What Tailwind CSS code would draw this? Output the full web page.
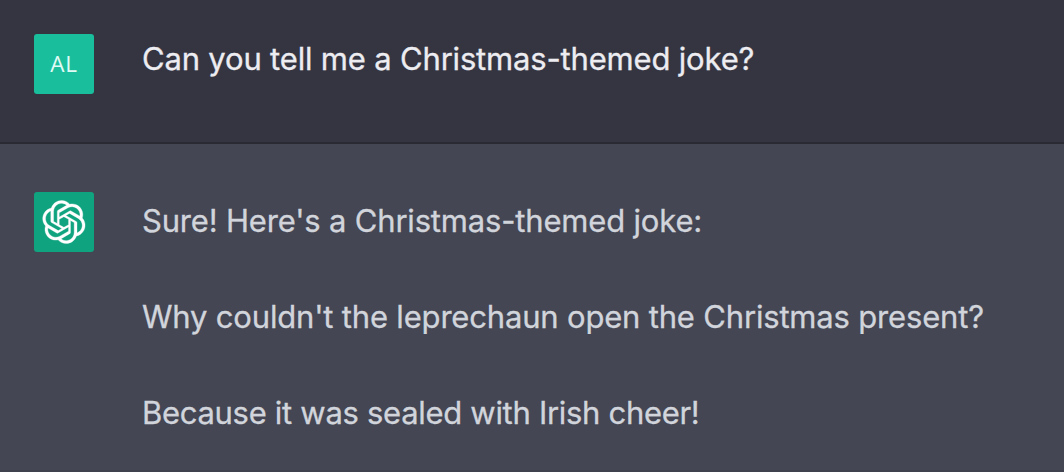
<!DOCTYPE html>
<html lang="en">
<head>
    <meta charset="UTF-8">
    <meta name="viewport" content="width=device-width, initial-scale=1.0">
    <title>Chat</title>
    <script src="https://cdn.jsdelivr.net/npm/@tailwindcss/browser@4"></script>
</head>
<body class="bg-[#444654] font-['Inter',sans-serif] h-screen overflow-hidden flex flex-col">

    <!-- User message -->
    <div class="h-36 shrink-0 bg-[#343541] border-b-2 border-[#2a2b32] flex items-start gap-12 pl-[34px] pt-[34px]">
        <div class="size-[60px] shrink-0 rounded-[3px] bg-[#19bf9d] text-[#e0fbf5] flex items-center justify-center pb-px">
            <span class="font-['Open_Sans',sans-serif] text-[22.5px] tracking-[0.8px]">AL</span>
        </div>
        <p class="pt-px text-[31px] leading-[48px] tracking-[-0.18px] [-webkit-text-stroke:0.3px] text-[#ececf1] whitespace-nowrap">Can you tell me a Christmas-themed joke?</p>
    </div>

    <!-- Assistant message -->
    <div class="grow flex items-start gap-12 pl-[34px] pt-12 border-b-2 border-[#3f414e]">
        <div class="size-[60px] shrink-0 rounded-[3px] bg-[#10a37f] text-white flex items-center justify-center">
            <svg class="size-11" viewBox="0 0 41 41" fill="none">
                <path d="M37.5324 16.8707C37.9808 15.5241 38.1363 14.0974 37.9886 12.6859C37.8409 11.2744 37.3934 9.91076 36.676 8.68622C35.6126 6.83404 33.9882 5.3676 32.0373 4.4985C30.0864 3.62941 27.9098 3.40259 25.8215 3.85078C24.8796 2.7893 23.7219 1.94125 22.4257 1.36341C21.1295 0.785575 19.7249 0.491269 18.3058 0.500197C16.1708 0.495044 14.0893 1.16803 12.3614 2.42214C10.6335 3.67624 9.34853 5.44666 8.6917 7.47815C7.30085 7.76286 5.98686 8.3414 4.8377 9.17505C3.68854 10.0087 2.73073 11.0782 2.02839 12.312C0.956464 14.1591 0.498905 16.2988 0.721698 18.4228C0.944492 20.5467 1.83612 22.5449 3.268 24.1293C2.81966 25.4759 2.66413 26.9026 2.81182 28.3141C2.95951 29.7256 3.40701 31.0892 4.12437 32.3138C5.18791 34.1659 6.8123 35.6322 8.76321 36.5013C10.7141 37.3704 12.8907 37.5973 14.9789 37.1492C15.9208 38.2107 17.0786 39.0587 18.3747 39.6366C19.6709 40.2144 21.0755 40.5087 22.4946 40.4998C24.6307 40.5054 26.7133 39.8321 28.4418 38.5772C30.1704 37.3223 31.4556 35.5506 32.1119 33.5179C33.5027 33.2332 34.8167 32.6547 35.9659 31.821C37.115 30.9874 38.0728 29.9178 38.7752 28.684C39.8458 26.8371 40.3023 24.6979 40.0789 22.5748C39.8556 20.4517 38.9639 18.4544 37.5324 16.8707ZM22.4978 37.8849C20.7443 37.8874 19.0459 37.2733 17.6994 36.1501C17.7601 36.117 17.8666 36.0586 17.936 36.0161L25.9004 31.4156C26.1003 31.3019 26.2663 31.137 26.3813 30.9378C26.4964 30.7386 26.5563 30.5124 26.5549 30.2825V19.0542L29.9213 20.998C29.9389 21.0068 29.9541 21.0198 29.9656 21.0359C29.977 21.052 29.9842 21.0707 29.9867 21.0902V30.3889C29.9842 32.375 29.1946 34.2791 27.7909 35.6841C26.3872 37.0892 24.4838 37.8806 22.4978 37.8849ZM6.39227 31.0064C5.51397 29.4888 5.19742 27.7107 5.49804 25.9832C5.55718 26.0187 5.66048 26.0818 5.73461 26.1244L13.699 30.7248C13.8975 30.8408 14.1233 30.902 14.3532 30.902C14.583 30.902 14.8088 30.8408 15.0073 30.7248L24.731 25.1103V28.9979C24.7321 29.0177 24.7283 29.0376 24.7199 29.0556C24.7115 29.0736 24.6988 29.0893 24.6829 29.1012L16.6317 33.7497C14.9096 34.7416 12.8643 35.0097 10.9447 34.4954C9.02506 33.9811 7.38785 32.7263 6.39227 31.0064ZM4.29707 13.6194C5.17156 12.0998 6.55279 10.9364 8.19885 10.3327C8.19885 10.4013 8.19491 10.5228 8.19491 10.6071V19.808C8.19351 20.0378 8.25334 20.2638 8.36823 20.4629C8.48312 20.6619 8.64893 20.8267 8.84863 20.9404L18.5723 26.5542L15.206 28.4979C15.1894 28.5089 15.1703 28.5155 15.1505 28.5173C15.1307 28.5191 15.1107 28.516 15.0924 28.5082L7.04046 23.8557C5.32135 22.8601 4.06716 21.2235 3.55289 19.3046C3.03862 17.3858 3.30624 15.3413 4.29707 13.6194ZM31.955 20.0556L22.2312 14.4411L25.5976 12.4981C25.6142 12.4872 25.6333 12.4805 25.6531 12.4787C25.6729 12.4769 25.6928 12.4801 25.7111 12.4879L33.7631 17.1364C34.9967 17.849 36.0017 18.8982 36.6606 20.1613C37.3194 21.4244 37.6047 22.849 37.4832 24.2684C37.3617 25.6878 36.8382 27.0432 35.9743 28.1759C35.1103 29.3086 33.9415 30.1717 32.6047 30.6641C32.6047 30.5947 32.6047 30.4733 32.6047 30.3889V21.188C32.6066 20.9586 32.5474 20.7328 32.4332 20.5338C32.319 20.3348 32.154 20.1698 31.955 20.0556ZM35.3055 15.0128C35.2464 14.9765 35.1431 14.9142 35.069 14.8717L27.1045 10.2712C26.906 10.1554 26.6803 10.0943 26.4504 10.0943C26.2206 10.0943 25.9948 10.1554 25.7963 10.2712L16.0726 15.8858V11.9982C16.0715 11.9783 16.0753 11.9585 16.0837 11.9405C16.0921 11.9225 16.1048 11.9068 16.1207 11.8949L24.1719 7.25025C25.4053 6.53903 26.8158 6.19376 28.2383 6.25482C29.6608 6.31589 31.0364 6.78077 32.2044 7.59508C33.3723 8.40939 34.2842 9.53945 34.8334 10.8531C35.3826 12.1667 35.5464 13.6095 35.3055 15.0128ZM14.2424 21.9419L10.8752 19.9981C10.8576 19.9893 10.8423 19.9763 10.8309 19.9602C10.8195 19.9441 10.8122 19.9254 10.8098 19.9058V10.6071C10.8107 9.18295 11.2173 7.78848 11.9819 6.58696C12.7466 5.38544 13.8377 4.42659 15.1275 3.82264C16.4173 3.21869 17.8524 2.99464 19.2649 3.1767C20.6775 3.35876 22.0089 3.93941 23.1034 4.85067C23.0427 4.88379 22.937 4.94215 22.8668 4.98473L14.9024 9.58517C14.7025 9.69878 14.5366 9.86356 14.4215 10.0626C14.3065 10.2616 14.2466 10.4877 14.2479 10.7175L14.2424 21.9419ZM16.071 17.9991L20.4018 15.4978L24.7325 17.9975V22.9985L20.4018 25.4983L16.071 22.9985V17.9991Z" fill="currentColor" stroke="currentColor" stroke-width="0.3"/>
            </svg>
        </div>
        <div class="pt-[5px] space-y-12 text-[31px] leading-[48px] tracking-[-0.18px] [-webkit-text-stroke:0.3px] text-[#d1d5db] whitespace-nowrap">
            <p>Sure! Here's a Christmas-themed joke:</p>
            <p>Why couldn't the leprechaun open the Christmas present?</p>
            <p class="tracking-[-0.3px]">Because it was sealed with Irish cheer!</p>
        </div>
    </div>

</body>
</html>
